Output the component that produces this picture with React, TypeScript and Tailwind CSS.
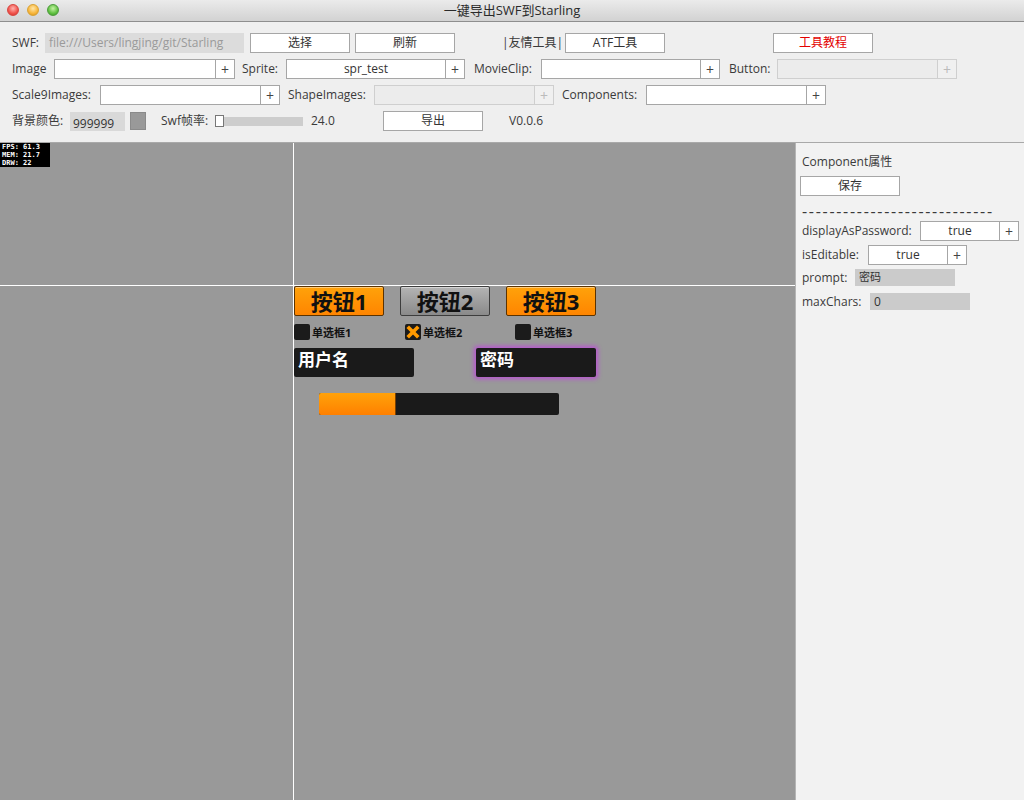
import type { ReactElement, ReactNode } from 'react';

const uiFont = "font-['Open_Sans','Noto_Sans_CJK_SC',sans-serif]";

function Btn({ children, className = '' }: { children: ReactNode; className?: string }): ReactElement {
  return (
    <div
      className={`flex h-[20px] w-[100px] shrink-0 items-center justify-center border border-[#a6a6a6] bg-white text-[12px] text-[#333] ${className}`}
    >
      {children}
    </div>
  );
}

function Label({ children, className }: { children: ReactNode; className: string }): ReactElement {
  return <div className={`shrink-0 whitespace-nowrap text-[12px] text-[#3a3a3a] ${className}`}>{children}</div>;
}

function AddField({
  width,
  value,
  disabled = false,
}: {
  width: string;
  value?: string;
  disabled?: boolean;
}): ReactElement {
  return (
    <div className="flex h-[20px] shrink-0">
      <div
        className={[
          'flex h-full items-center justify-center border text-[12px]',
          width,
          disabled ? 'border-[#cfcfcf] bg-[#ececec]' : 'border-[#a6a6a6] bg-white text-[#333]',
        ].join(' ')}
      >
        {value}
      </div>
      <div
        className={[
          'flex h-full w-[19px] items-center justify-center border border-l-0 text-[14px]',
          disabled ? 'border-[#cfcfcf] bg-[#f0f0f0] text-[#bbb]' : 'border-[#a6a6a6] bg-white text-[#444]',
        ].join(' ')}
      >
        +
      </div>
    </div>
  );
}

function Check({ label, checked = false, width }: { label: string; checked?: boolean; width: string }): ReactElement {
  return (
    <div className={`flex h-[16px] shrink-0 items-center gap-[2px] ${width}`}>
      <svg viewBox="0 0 16 16" className="h-[16px] w-[16px]">
        <rect x="0" y="0" width="16" height="16" rx="2" fill="#1b1b1b" />
        {checked && (
          <g stroke="#ff9a00" strokeWidth="3.6" strokeLinecap="square">
            <line x1="4" y1="4" x2="12" y2="12" />
            <line x1="12" y1="4" x2="4" y2="12" />
          </g>
        )}
      </svg>
      <span className="text-[11px] font-bold leading-none text-[#111]">{label}</span>
    </div>
  );
}

function StageButton({ label, gray = false }: { label: string; gray?: boolean }): ReactElement {
  return (
    <div
      className={[
        'flex h-[30px] w-[90px] shrink-0 items-center justify-center rounded-[2px] border text-[22px] font-bold leading-none text-[#111] shadow-[inset_0_1px_0_rgba(255,255,255,0.45)]',
        gray
          ? 'border-[#3d3d3d] bg-[linear-gradient(#b4b4b4,#8a8a8a)]'
          : 'border-[#5c3300] bg-[linear-gradient(#ffa20a,#ff8500)]',
      ].join(' ')}
    >
      {label}
    </div>
  );
}

export default function App(): ReactElement {
  return (
    <div className={`flex h-[800px] w-[1024px] flex-col overflow-hidden bg-[#999999] ${uiFont}`}>
      {/* title bar */}
      <div className="relative flex h-[22px] shrink-0 items-center justify-center border-b border-[#8e8e8e] bg-[linear-gradient(#ebebeb,#d2d2d2)]">
        <div className="absolute left-[7px] top-[4px] flex gap-[8px]">
          <span className="h-[12px] w-[12px] rounded-full border border-[#d8453f] bg-[radial-gradient(circle_at_50%_35%,#ffb3ae,#f0524b_60%,#c9332d)]" />
          <span className="h-[12px] w-[12px] rounded-full border border-[#d9a233] bg-[radial-gradient(circle_at_50%_35%,#ffe6a8,#f7b53a_60%,#d08d1c)]" />
          <span className="h-[12px] w-[12px] rounded-full border border-[#4c9b3c] bg-[radial-gradient(circle_at_50%_35%,#c5f2a4,#5fc040_60%,#3b9027)]" />
        </div>
        <span className="text-[13px] text-[#2a2a2a]">一键导出SWF到Starling</span>
      </div>

      {/* toolbar */}
      <div className="flex h-[121px] shrink-0 flex-col gap-[6px] border-b border-[#a9a9a9] bg-[#efefef] pl-[12px] pt-[11px]">
        <div className="flex h-[20px] items-center">
          <Label className="w-[33px]">SWF:</Label>
          <div className="flex h-[20px] w-[199px] shrink-0 items-center overflow-hidden whitespace-nowrap bg-[#dcdcdc] px-[4px] text-[12px] text-[#9a9a9a]">
            file:///Users/lingjing/git/Starling
          </div>
          <Btn className="ml-[6px]">选择</Btn>
          <Btn className="ml-[5px]">刷新</Btn>
          <Label className="ml-[47px] w-[63px]">|友情工具|</Label>
          <Btn>ATF工具</Btn>
          <Btn className="ml-[108px] text-[#e30000]">工具教程</Btn>
        </div>

        <div className="flex h-[20px] items-center">
          <Label className="w-[42px]">Image</Label>
          <AddField width="w-[162px]" />
          <Label className="ml-[7px] w-[44px]">Sprite:</Label>
          <AddField width="w-[160px]" value="spr_test" />
          <Label className="ml-[9px] w-[67px]">MovieClip:</Label>
          <AddField width="w-[160px]" />
          <Label className="ml-[9px] w-[48px]">Button:</Label>
          <AddField width="w-[161px]" disabled />
        </div>

        <div className="flex h-[20px] items-center">
          <Label className="w-[88px]">Scale9Images:</Label>
          <AddField width="w-[161px]" />
          <Label className="ml-[8px] w-[86px]">ShapeImages:</Label>
          <AddField width="w-[161px]" disabled />
          <Label className="ml-[8px] w-[84px]">Components:</Label>
          <AddField width="w-[161px]" />
        </div>

        <div className="flex h-[20px] items-center">
          <Label className="w-[58px]">背景颜色:</Label>
          <div className="flex h-[19px] w-[55px] shrink-0 items-end bg-[#d9d9d9] px-[3px] pb-[1px] text-[12px] leading-none text-[#333]">
            999999
          </div>
          <div className="ml-[5px] h-[18px] w-[16px] shrink-0 border border-[#8a8a8a] bg-[#999999]" />
          <Label className="ml-[15px] w-[54px]">Swf帧率:</Label>
          <div className="relative flex h-[12px] w-[88px] shrink-0 items-center">
            <div className="h-[9px] w-full bg-[#cdcdcd]" />
            <div className="absolute left-0 top-0 h-[12px] w-[9px] border border-[#777] bg-white" />
          </div>
          <Label className="ml-[8px] w-[72px]">24.0</Label>
          <Btn>导出</Btn>
          <Label className="ml-[26px] w-[60px]">V0.0.6</Label>
        </div>
      </div>

      <div className="flex min-h-0 flex-1">
        {/* stage */}
        <div className="relative w-[795px] shrink-0 overflow-hidden bg-[#999999]">
          <div className="absolute left-[293px] top-0 h-full w-px bg-white" />
          <div className="absolute left-0 top-[142px] h-px w-full bg-white" />

          <div className="absolute left-0 top-0 flex h-[24px] w-[50px] flex-col justify-center bg-black pl-[2px] font-['DejaVu_Sans_Mono',monospace] text-[7px] font-bold leading-[8px] text-white">
            <span>FPS: 61.3</span>
            <span>MEM: 21.7</span>
            <span>DRW: 22</span>
          </div>

          <div className="absolute left-[294px] top-[143px] flex w-[302px] flex-col">
            <div className="flex gap-[16px]">
              <StageButton label="按钮1" />
              <StageButton label="按钮2" gray />
              <StageButton label="按钮3" />
            </div>
            <div className="mt-[8px] flex">
              <Check label="单选框1" width="w-[111px]" />
              <Check label="单选框2" checked width="w-[110px]" />
              <Check label="单选框3" width="w-[80px]" />
            </div>
            <div className="mt-[8px] flex justify-between">
              <div className="h-[29px] w-[120px] rounded-[2px] bg-[#1a1a1a] pl-[4px] pt-[2px] text-[17px] font-bold leading-[20px] text-white">
                用户名
              </div>
              <div className="h-[29px] w-[120px] rounded-[2px] bg-[#1a1a1a] pl-[4px] pt-[2px] text-[17px] font-bold leading-[20px] text-white shadow-[0_0_4px_2px_rgba(190,70,220,0.85)]">
                密码
              </div>
            </div>
            <div className="ml-[25px] mt-[16px] flex h-[22px] w-[240px] overflow-hidden rounded-[2px] bg-[#1a1a1a]">
              <div className="h-full w-[77px] border-r border-[#7a4000] bg-[linear-gradient(#ffa20a,#ff8000)]" />
            </div>
          </div>
        </div>

        {/* property panel */}
        <div className="flex flex-1 flex-col border-l border-[#b5b5b5] bg-[#f2f2f2] pl-[6px] pt-[11px] text-[12px] text-[#3a3a3a]">
          <div className="h-[16px] leading-[16px]">Component属性</div>
          <div className="ml-[-2px] mt-[6px] flex h-[20px] w-[100px] items-center justify-center border border-[#a6a6a6] bg-white text-[#333]">
            保存
          </div>
          <div className="mt-[8px] h-[14px] whitespace-nowrap text-[16px] leading-[14px] tracking-[1.7px]">
            ----------------------------
          </div>
          <div className="mt-[3px] flex h-[20px] items-center">
            <span className="w-[118px]">displayAsPassword:</span>
            <AddField width="w-[80px]" value="true" />
          </div>
          <div className="mt-[4px] flex h-[20px] items-center">
            <span className="w-[66px]">isEditable:</span>
            <AddField width="w-[80px]" value="true" />
          </div>
          <div className="mt-[4px] flex h-[17px] items-center">
            <span className="w-[53px]">prompt:</span>
            <div className="flex h-[17px] w-[100px] items-center bg-[#cbcbcb] px-[4px] text-[11px] text-[#333]">密码</div>
          </div>
          <div className="mt-[7px] flex h-[17px] items-center">
            <span className="w-[68px]">maxChars:</span>
            <div className="flex h-[17px] w-[100px] items-center bg-[#cbcbcb] px-[4px] text-[12px] text-[#333]">0</div>
          </div>
        </div>
      </div>
    </div>
  );
}
